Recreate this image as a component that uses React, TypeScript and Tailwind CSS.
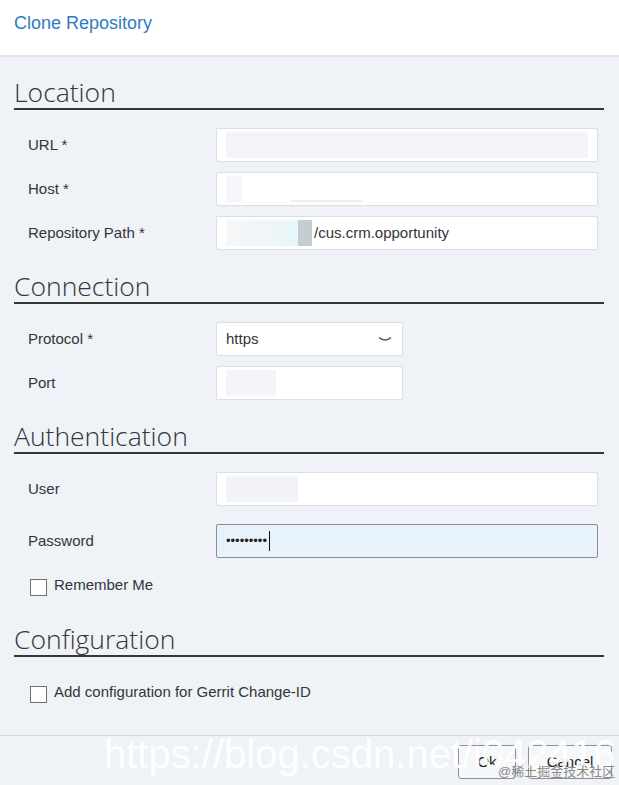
import * as React from "react";

const labelFont = { fontFamily: '"Liberation Sans", Arial, sans-serif' };

function Heading({ title, gap = "mt-0" }: { title: string; gap?: string }) {
  return (
    <div
      className={`${gap} h-[32px] border-b-2 border-[#363636] text-[26.5px] leading-[28px] font-light text-[#32363a]`}
      style={{ fontFamily: '"Open Sans", "Noto Sans", sans-serif' }}
    >
      {title}
    </div>
  );
}

function Field({
  label,
  width = "w-[382px]",
  active,
  children,
}: {
  label: string;
  width?: string;
  active?: boolean;
  children?: React.ReactNode;
}) {
  return (
    <div className="flex items-center pl-[14px]">
      <div className="w-[188px] text-[15px] text-[#32363a]">{label}</div>
      <div
        className={`relative flex h-[34px] ${width} items-center overflow-hidden rounded-[2px] border px-[9px] text-[15px] text-[#32363a] ${
          active
            ? "border-[#8a8e93] bg-[#e7f2fb]"
            : "border-[#dcdfe3] bg-white shadow-[0_0_1px_rgba(0,0,0,0.08)]"
        }`}
      >
        {children}
      </div>
    </div>
  );
}

function Check({ label }: { label: string }) {
  return (
    <div className="flex items-start gap-[7px] pl-[16px]">
      <span className="h-[17px] w-[17px] shrink-0 border border-[#6d7175] bg-white" />
      <span className="-mt-[3px] text-[15px] leading-[17px] text-[#32363a]">{label}</span>
    </div>
  );
}

export default function App() {
  return (
    <div
      className="relative flex h-[785px] w-[619px] flex-col overflow-hidden bg-[#eff2f7]"
      style={labelFont}
    >
      <header className="flex h-[57px] shrink-0 items-center border-b-2 border-[#dfe2e6] bg-white pb-[8px] pl-[14px]">
        <span className="text-[18px] text-[#2f7bbf]">Clone Repository</span>
      </header>

      <main className="flex-1 pl-[14px] pr-[15px] pt-[21px]">
        <Heading title="Location" />
        <div className="mt-[18px] flex flex-col gap-[10px]">
          <Field label="URL *">
            <span className="h-[26px] w-full bg-[#f2f4f8]" />
          </Field>
          <Field label="Host *">
            <span className="h-[26px] w-[16px] bg-[#f4f6f9]" />
            <span className="absolute bottom-[3px] left-[74px] h-[2px] w-[72px] bg-[#eceef1]" />
          </Field>
          <Field label="Repository Path *">
            <span className="h-[26px] w-[72px] bg-gradient-to-r from-[#f5f7f9] via-[#f2f5f7] to-[#e4f7fa]" />
            <span className="h-[26px] w-[14px] bg-[#c5cdd0]" />
            <span className="ml-[2px]">/cus.crm.opportunity</span>
          </Field>
        </div>

        <Heading title="Connection" gap="mt-[22px]" />
        <div className="mt-[18px] flex flex-col gap-[10px]">
          <Field label="Protocol *" width="w-[187px]">
            <span className="flex-1">https</span>
            <svg width="14" height="8" viewBox="0 0 14 8" className="mr-[1px]">
              <path d="M1 2.5 Q7 7.5 13 2.5" fill="none" stroke="#4f5357" strokeWidth="1.6" />
            </svg>
          </Field>
          <Field label="Port" width="w-[187px]">
            <span className="h-[26px] w-[50px] bg-[#f3f5f8]" />
          </Field>
        </div>

        <Heading title="Authentication" gap="mt-[22px]" />
        <div className="mt-[18px] flex flex-col gap-[18px]">
          <Field label="User">
            <span className="h-[26px] w-[72px] bg-[#f1f3f7]" />
          </Field>
          <Field label="Password" active>
            <span className="text-[13px] text-[#222]">•••••••••</span>
            <span className="ml-[2px] h-[20px] w-[1px] bg-[#111]" />
          </Field>
        </div>
        <div className="mt-[21px]">
          <Check label="Remember Me" />
        </div>

        <Heading title="Configuration" gap="mt-[29px]" />
        <div className="mt-[29px]">
          <Check label="Add configuration for Gerrit Change-ID" />
        </div>
      </main>

      <footer className="flex h-[50px] shrink-0 items-start justify-end gap-[12px] border-t border-[#d6d9dd] pr-[7px] pt-[9px]">
        <button className="h-[34px] w-[58px] rounded-[3px] border border-[#8e9194] bg-[#f6f7f8] text-[15px] text-[#222]">
          Ok
        </button>
        <button className="h-[34px] w-[84px] rounded-[3px] border border-[#8e9194] bg-[#f6f7f8] text-[15px] text-[#222]">
          Cancel
        </button>
      </footer>

      <div className="pointer-events-none absolute left-[104px] top-[734px] whitespace-nowrap text-[40px] leading-[40px] text-white/90">
        https://blog.csdn.net/i042416
      </div>
      <div
        className="pointer-events-none absolute left-[498px] top-[765px] whitespace-nowrap text-[13px] leading-[14px] text-[#8a8a8a]"
        style={{ fontFamily: '"Liberation Sans", "Noto Sans CJK SC", sans-serif' }}
      >
        @稀土掘金技术社区
      </div>
    </div>
  );
}
